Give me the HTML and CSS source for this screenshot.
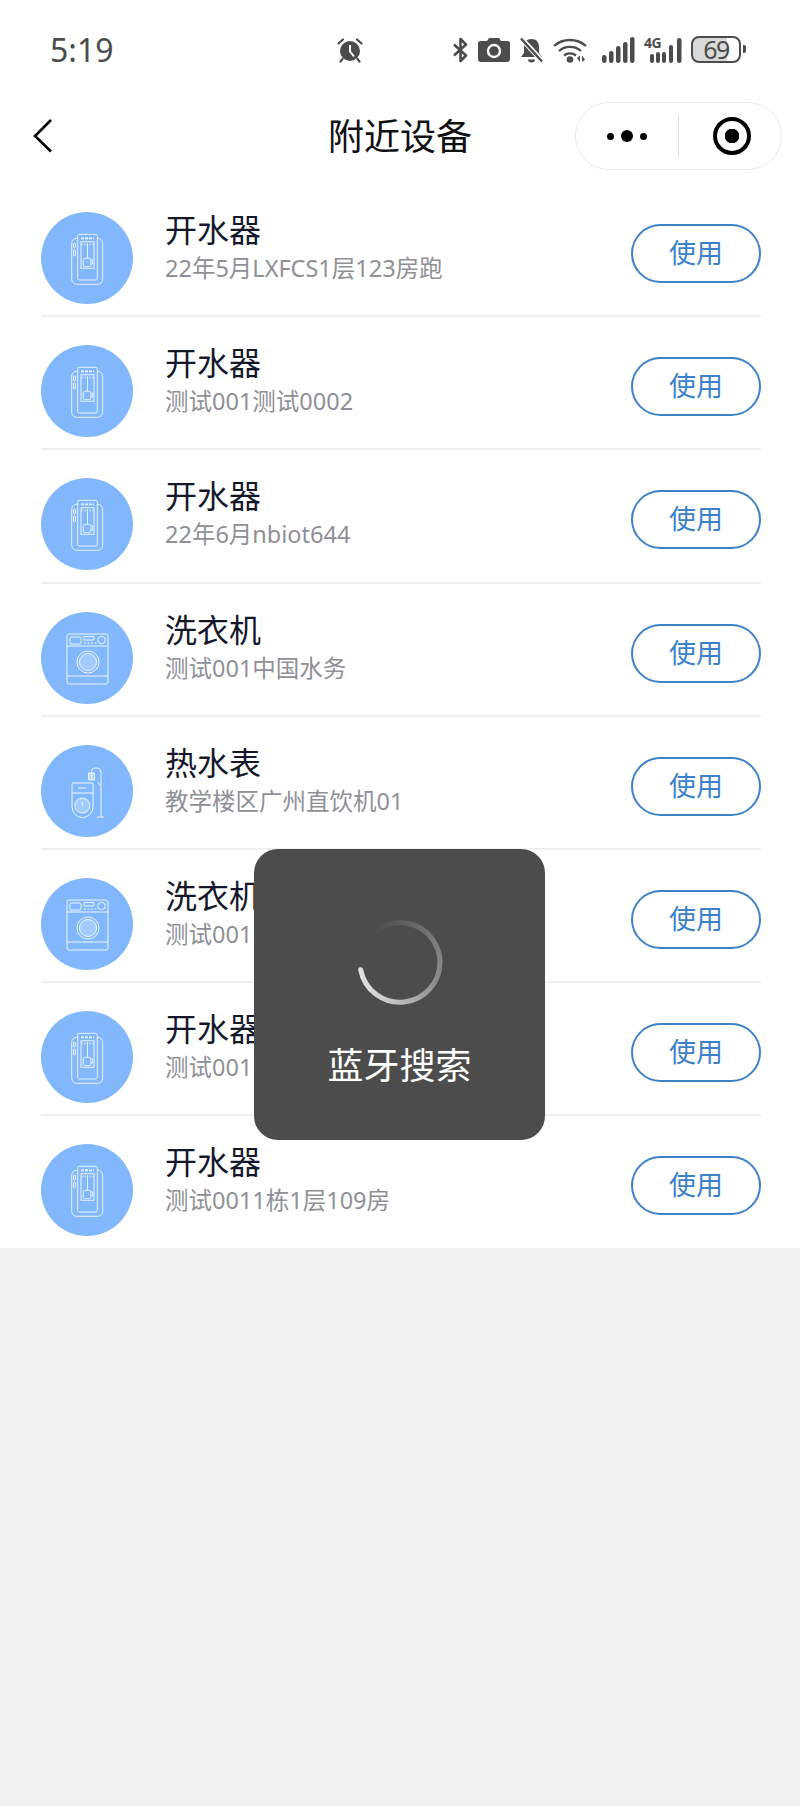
FILE: index.html
```html
<!DOCTYPE html>
<html lang="zh-CN">
<head>
<meta charset="utf-8">
<title>附近设备</title>
<link rel="stylesheet" href="styles.css">
</head>
<body>
<svg class="defs" width="0" height="0" aria-hidden="true">
  <symbol id="dev-water" viewBox="0 0 92 92">
    <g fill="none" stroke="#fff" stroke-width="1" opacity=".8">
      <rect x="30.700" y="26.300" width="31" height="46" rx="5"/>
      <rect x="36.700" y="22.300" width="19.600" height="45.700" rx="1.500" fill="#82b8fb"/>
      <rect x="32.500" y="31" width="2" height="5" rx="1"/>
      <rect x="32.500" y="38" width="2" height="6" rx="1"/>
      <path d="M40 26.300h13" stroke-width="1.800" stroke-dasharray="3 1"/>
      <rect x="40" y="29.700" width="13" height="26.600"/>
      <path d="M46.500 31v15"/>
      <path d="M41 31.500v2M44 31.500v2M49 31.500v2M52 31.500v2"/>
      <rect x="42.300" y="46.300" width="7.500" height="8.400" rx="1.500"/>
      <path d="M49.800 48h1.900v4h-1.900"/>
    </g>
  </symbol>
  <symbol id="dev-washer" viewBox="0 0 92 92">
    <g fill="none" stroke="#fff" stroke-width="1" opacity=".85">
      <rect x="26" y="22" width="41" height="50" rx="2"/>
      <path d="M26 34h41M26 64h41"/>
      <rect x="29" y="25" width="11" height="7" rx="1"/>
      <rect x="43" y="24.500" width="10" height="3.500" rx=".5"/>
      <path d="M43 31h13" stroke-dasharray="2 1.500"/>
      <circle cx="60.500" cy="28" r="3.700"/>
      <circle cx="47" cy="50" r="11"/>
      <circle cx="47" cy="50" r="8.500" fill="#a9cffc"/>
    </g>
  </symbol>
  <symbol id="dev-meter" viewBox="0 0 92 92">
    <g fill="none" stroke="#fff" stroke-width="1" opacity=".85">
      <path d="M56 72h7M60 72V27a4 4 0 0 0-4-4h-2a3.500 3.500 0 0 0-3.500 3.500V28"/>
      <path d="M47.500 28h6v7h-6zM49 28v7M50.500 28v7M52 28v7"/>
      <path d="M56.500 37l3 4"/>
      <path d="M32 38h19a1 1 0 0 1 1 1v23a10.500 10.500 0 0 1-21 0V39a1 1 0 0 1 1-1z"/>
      <path d="M31 48h21"/>
      <path d="M37 43h8"/>
      <circle cx="41.300" cy="60.500" r="7.500" fill="#a9cffc"/>
      <path d="M41.300 57v4"/>
    </g>
  </symbol>
</svg>

<div class="page">
  <header class="status">
    <span class="time">5:19</span>
    <svg class="ic-alarm" width="26" height="26" viewBox="0 0 26 26">
      <circle cx="13" cy="14" r="10" fill="#4c4c4c"/>
      <path d="M13 8v6.500l4 5" fill="none" stroke="#fff" stroke-width="2"/>
      <path d="M1.500 6.500L6 2.500M24.500 6.500L20 2.500M5.500 22l-2 2.500M20.500 22l2 2.500" stroke="#4c4c4c" stroke-width="2.200" fill="none" stroke-linecap="round"/>
    </svg>
    <div class="status-right">
      <svg class="ic-bt" width="17" height="26" viewBox="0 0 17 26">
        <path d="M2 7.500l12 11-5.500 5.500V2l5.500 5.500-12 11" fill="none" stroke="#4c4c4c" stroke-width="2.600" stroke-linejoin="round"/>
      </svg>
      <svg class="ic-cam" width="32" height="26" viewBox="0 0 32 26">
        <path d="M3 4h6l2-3h10l2 3h6a2.500 2.500 0 0 1 3 2.500V22a3 3 0 0 1-3 3H3a3 3 0 0 1-3-3V6.500A2.500 2.500 0 0 1 3 4z" fill="#4c4c4c"/>
        <circle cx="16" cy="14" r="6" fill="none" stroke="#fff" stroke-width="2.400"/>
      </svg>
      <svg class="ic-bell" width="23" height="26" viewBox="0 0 23 26">
        <path d="M11.500 2c5 0 7.500 3.500 7.500 8v6l3 4H1l3-4v-6c0-4.500 2.500-8 7.500-8z" fill="#4c4c4c"/>
        <path d="M8 22.500h7a3.500 3 0 0 1-7 0z" fill="#4c4c4c"/>
        <path d="M0 0l23 25" stroke="#fff" stroke-width="5"/>
        <path d="M1 1.500l21 23" stroke="#4c4c4c" stroke-width="2.400"/>
      </svg>
      <svg class="ic-wifi" width="34" height="26" viewBox="0 0 34 26">
        <path d="M1 9c9-8 23-8 32 0M6 14c6-5.500 16-5.500 22 0M11 18.500c3.500-2.800 8.500-2.800 12 0" fill="none" stroke="#4c4c4c" stroke-width="2.300"/>
        <circle cx="17" cy="22.500" r="3.300" fill="#4c4c4c"/>
        <path d="M24 21l3-2.500V25zM29 18.500V25l3-2.500z" fill="#4c4c4c"/>
      </svg>
      <svg class="ic-sig" width="33" height="26" viewBox="0 0 33 26">
        <g fill="#4c4c4c"><rect x="0" y="18" width="4.500" height="8" rx="2.200"/><rect x="7" y="14" width="4.500" height="12" rx="2.200"/><rect x="14" y="9" width="4.500" height="17" rx="2.200"/><rect x="21" y="5" width="4.500" height="21" rx="2.200"/><rect x="28" y="0" width="4.500" height="26" rx="2.200"/></g>
      </svg>
      <div class="sig4g">
        <span class="g4">4G</span>
        <svg width="39" height="26" viewBox="0 0 39 26">
          <g fill="#4c4c4c"><rect x="6" y="17" width="4" height="9" rx="2"/><rect x="12" y="15" width="4" height="11" rx="2"/><rect x="18" y="15" width="4" height="11" rx="2"/><rect x="25" y="8" width="4" height="18" rx="2"/><rect x="33" y="1" width="4.500" height="25" rx="2.200"/></g>
        </svg>
      </div>
      <div class="battery"><span class="batt-num">69</span></div>
      <span class="batt-tip"></span>
    </div>
  </header>

  <nav class="navbar">
    <svg class="back" width="22" height="36" viewBox="0 0 22 36">
      <path d="M19 2L3 18l16 15.500" fill="none" stroke="#000" stroke-width="2.600"/>
    </svg>
    <h1 class="title">附近设备</h1>
    <div class="capsule">
      <div class="cap-more"><i class="dot"></i><i class="dot big"></i><i class="dot"></i></div>
      <span class="cap-div"></span>
      <div class="cap-close"><span class="target"></span></div>
    </div>
  </nav>

  <main class="list">
    <div class="row"><svg class="avatar"><use href="#dev-water"/></svg><div class="info"><div class="name">开水器</div><div class="sub">22年5月LXFCS1层123房跑</div></div><button class="use">使用</button></div>
    <div class="row"><svg class="avatar"><use href="#dev-water"/></svg><div class="info"><div class="name">开水器</div><div class="sub">测试001测试0002</div></div><button class="use">使用</button></div>
    <div class="row"><svg class="avatar"><use href="#dev-water"/></svg><div class="info"><div class="name">开水器</div><div class="sub">22年6月nbiot644</div></div><button class="use">使用</button></div>
    <div class="row"><svg class="avatar"><use href="#dev-washer"/></svg><div class="info"><div class="name">洗衣机</div><div class="sub">测试001中国水务</div></div><button class="use">使用</button></div>
    <div class="row"><svg class="avatar"><use href="#dev-meter"/></svg><div class="info"><div class="name">热水表</div><div class="sub">教学楼区广州直饮机01</div></div><button class="use">使用</button></div>
    <div class="row"><svg class="avatar"><use href="#dev-washer"/></svg><div class="info"><div class="name">洗衣机</div><div class="sub">测试001</div></div><button class="use">使用</button></div>
    <div class="row"><svg class="avatar"><use href="#dev-water"/></svg><div class="info"><div class="name">开水器</div><div class="sub">测试001</div></div><button class="use">使用</button></div>
    <div class="row"><svg class="avatar"><use href="#dev-water"/></svg><div class="info"><div class="name">开水器</div><div class="sub">测试0011栋1层109房</div></div><button class="use">使用</button></div>
  </main>

  <div class="toast">
    <svg class="spinner" width="90" height="90" viewBox="0 0 90 90">
      <defs>
        <linearGradient id="sp1" gradientUnits="userSpaceOnUse" x1="5" y1="60" x2="85" y2="45"><stop offset="0" stop-color="#e2e2e2"/><stop offset="1" stop-color="#858585"/></linearGradient>
        <linearGradient id="sp2" gradientUnits="userSpaceOnUse" x1="85" y1="45" x2="17" y2="17"><stop offset="0" stop-color="#858585"/><stop offset="1" stop-color="#4c4c4c"/></linearGradient>
      </defs>
      <path d="M85 45A40 40 0 0 0 17 17" fill="none" stroke="url(#sp2)" stroke-width="5"/>
      <path d="M5.700 52.700A40 40 0 0 0 85 45" fill="none" stroke="url(#sp1)" stroke-width="5" stroke-linecap="round"/>
    </svg>
    <div class="toast-text">蓝牙搜索</div>
  </div>
</div>
</body>
</html>
```

FILE: styles.css
```css
* { box-sizing: border-box; }
html, body { margin: 0; padding: 0; }
body {
  background: #f1f1f1;
  font-family: "Noto Sans CJK SC", "Noto Sans", sans-serif;
}
.defs { position: absolute; }
.page { position: relative; width: 800px; height: 1806px; }

.status {
  height: 88px;
  padding: 37px 0 0 50px;
  background: #fff;
  display: flex;
  align-items: flex-start;
}
.time {
  font-family: "Noto Sans", sans-serif;
  font-size: 32px;
  line-height: 26px;
  color: #4c4c4c;
  width: 287px;
}
.status-right { margin-left: 89px; display: flex; align-items: flex-start; }
.status-right svg { display: block; }
.ic-cam { margin-left: 9px; }
.ic-bell { margin-left: 10px; }
.ic-wifi { margin-left: 10px; }
.ic-sig { margin-left: 15px; }
.sig4g { position: relative; margin-left: 9px; width: 39px; height: 26px; }
.g4 {
  position: absolute;
  left: 0;
  top: -1px;
  font-family: "Noto Sans", sans-serif;
  font-size: 14px;
  font-weight: 700;
  line-height: 14px;
  letter-spacing: -.5px;
  color: #4c4c4c;
}
.battery {
  margin-left: 8px;
  width: 50px;
  height: 27px;
  margin-top: -1px;
  border: 2px solid #4c4c4c;
  border-radius: 8px;
  background: linear-gradient(90deg, #d9d9d9 73%, #fff 73%);
  display: flex;
  align-items: center;
  justify-content: center;
}
.batt-num {
  font-family: "Noto Sans", sans-serif;
  font-size: 25px;
  line-height: 23px;
  letter-spacing: -1.500px;
  color: #4c4c4c;
}
.batt-tip {
  width: 3px;
  height: 8px;
  margin: 8px 0 0 2px;
  border-radius: 0 2px 2px 0;
  background: #4c4c4c;
}

.navbar {
  position: relative;
  height: 96px;
  background: #fff;
  display: flex;
  align-items: center;
  justify-content: center;
  padding-bottom: 5px;
}
.back { position: absolute; left: 32px; top: 30px; }
.title {
  margin: 0;
  font-size: 36px;
  font-weight: 400;
  line-height: 50px;
  color: #111;
}
.capsule {
  position: absolute;
  left: 575px;
  top: 14px;
  width: 207px;
  height: 68px;
  border: 1px solid #e8e8e8;
  border-radius: 34px;
  display: flex;
  align-items: center;
}
.cap-more { width: 102px; display: flex; align-items: center; justify-content: center; gap: 7px; }
.dot { width: 7px; height: 7px; border-radius: 50%; background: #000; }
.dot.big { width: 12px; height: 12px; }
.cap-div { width: 1px; height: 40px; background: #e2e2e2; }
.cap-close { flex: 1; display: flex; align-items: center; justify-content: center; padding-left: 3px; }
.target {
  width: 38px;
  height: 38px;
  border: 4px solid #000;
  border-radius: 50%;
  background: radial-gradient(circle, #000 0 7px, #fff 7.500px);
}

.list { background: #fff; padding: 0 39px 0 41px; height: 1064px; }
.row {
  height: 133.200px;
  border-bottom: 2px solid #f0f0f0;
  display: flex;
  align-items: flex-start;
  padding-top: 28px;
}
.avatar {
  flex: none;
  width: 92px;
  height: 92px;
  border-radius: 50%;
  background: #82b8fb;
}
.info { margin: -6px 0 0 32px; flex: 1; min-width: 0; }
.name {
  font-size: 32px;
  line-height: 44px;
  color: #15182a;
}
.sub {
  font-family: "Noto Sans", "Noto Sans CJK SC", sans-serif;
  font-size: 23.500px;
  line-height: 33px;
  margin-top: 2px;
  color: #8f9097;
}
.use {
  flex: none;
  margin-top: 12px;
  width: 130px;
  height: 59px;
  padding: 0 0 4px;
  border: 2px solid #3d82c8;
  border-radius: 30px;
  background: #fff;
  font-family: inherit;
  font-size: 27px;
  color: #3d82c8;
}

.toast {
  position: absolute;
  left: 254px;
  top: 849px;
  width: 291px;
  height: 291px;
  border-radius: 24px;
  background: #4c4c4c;
  display: flex;
  flex-direction: column;
  align-items: center;
  padding-top: 68px;
}
.spinner { display: block; }
.toast-text {
  margin-top: 31px;
  font-size: 36px;
  line-height: 50px;
  color: #fff;
}
```
